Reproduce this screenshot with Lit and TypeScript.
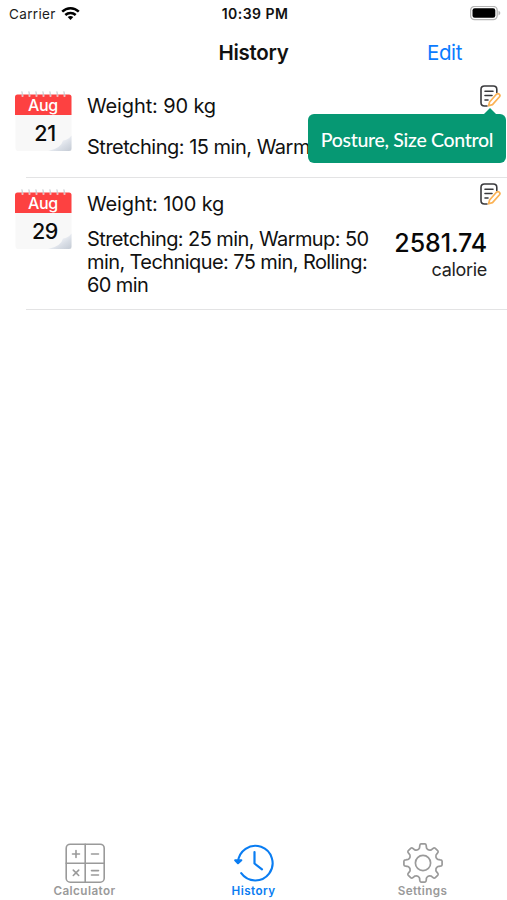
import { LitElement, html, css, svg, nothing } from "lit";
import { customElement, property } from "lit/decorators.js";

interface Entry {
  month: string;
  day: string;
  weight: string;
  activities: string;
  calories?: string;
  note?: string;
}

const ENTRIES: Entry[] = [
  {
    month: "Aug",
    day: "21",
    weight: "90 kg",
    activities: "Stretching: 15 min, Warmup",
    note: "Posture, Size Control",
  },
  {
    month: "Aug",
    day: "29",
    weight: "100 kg",
    activities: "Stretching: 25 min, Warmup: 50 min, Technique: 75 min, Rolling: 60 min",
    calories: "2581.74",
  },
];

const RINGS = [7.5, 14.5, 21.5, 28.5, 35.5, 42.5, 49.5];

function gearPath(c: number, outer: number, root: number, teeth: number): string {
  const pt = (r: number, deg: number) => {
    const a = (deg * Math.PI) / 180;
    return `${(c + r * Math.sin(a)).toFixed(2)} ${(c - r * Math.cos(a)).toFixed(2)}`;
  };
  let d = "";
  for (let i = 0; i < teeth; i++) {
    const a = (i * 360) / teeth;
    d += `${i ? "L" : "M"}${pt(root, a - 15.5)}`;
    d += `Q${pt(root + 0.6, a - 12.5)} ${pt(root + 1.5, a - 12)}`;
    d += `L${pt(outer - 1.6, a - 10.5)}Q${pt(outer, a - 9.6)} ${pt(outer, a - 6)}`;
    d += `L${pt(outer, a + 6)}Q${pt(outer, a + 9.6)} ${pt(outer - 1.6, a + 10.5)}`;
    d += `L${pt(root + 1.5, a + 12)}Q${pt(root + 0.6, a + 12.5)} ${pt(root, a + 15.5)}`;
    d += `Q${pt(root - 1.2, a + 22.5)} ${pt(root, a + 29.5)}`;
  }
  return d + "Z";
}

@customElement("status-bar")
export class StatusBar extends LitElement {
  static styles = css`
    :host {
      display: grid;
      grid-template-columns: 1fr auto 1fr;
      align-items: center;
      height: 27px;
      padding: 0 6px 0 9px;
      font-size: 13.5px;
      color: #1c1c1c;
    }
    .left { display: flex; align-items: center; gap: 5px; }
    .carrier { letter-spacing: 0.35px; }
    .time { font-weight: 600; font-size: 14px; letter-spacing: 0.45px; color: #111; }
    .battery { justify-self: end; }
    svg { display: block; }
  `;
  render() {
    return html`
      <div class="left">
        <span class="carrier">Carrier</span>
        <svg width="19" height="14" viewBox="0 0 19 14" fill="none" stroke="#000" stroke-width="2.5">
          <path d="M1.2 4.7C6 .1 13 .1 17.8 4.7" />
          <path d="M4.3 8C7.3 5.2 11.7 5.2 14.7 8" />
          <path d="M6.7 10.1C8.4 8.6 10.6 8.6 12.3 10.1L9.5 13.1Z" fill="#000" stroke="none" />
        </svg>
      </div>
      <span class="time">10:39 PM</span>
      <svg class="battery" width="31" height="15" viewBox="0 0 31 15">
        <rect x=".6" y=".4" width="26.6" height="13.2" rx="4" fill="#fff" stroke="#b5b5b5" stroke-width="1.3" />
        <rect x="2.5" y="2.2" width="22.8" height="9.6" rx="2.2" />
        <path d="M28.5 4.8Q30.4 5.6 30.4 7.1T28.5 9.4Z" fill="#b5b5b5" />
      </svg>
    `;
  }
}

@customElement("calendar-badge")
export class CalendarBadge extends LitElement {
  @property() month = "";
  @property() day = "";
  static styles = css`
    :host { display: block; width: 57px; height: 61px; margin-top: -1px; }
    svg { display: block; }
    text { font-family: Inter, sans-serif; text-anchor: middle; }
    .month { font-size: 16px; fill: #fff; font-weight: 500; letter-spacing: -0.3px; }
    .day { font-size: 21.5px; font-weight: 500; fill: #0b0b0b; letter-spacing: -0.3px; }
  `;
  render() {
    return html`
      <svg width="57" height="61" viewBox="0 0 57 61">
        <defs>
          <linearGradient id="fold" x1=".1" y1="0.1" x2="1" y2="1">
            <stop offset=".3" stop-color="#f3f5f9" />
            <stop offset=".65" stop-color="#d8dde5" />
            <stop offset="1" stop-color="#c3cad4" />
          </linearGradient>
        </defs>
        <path d="M.5 22H56.5V60H3Q.5 60 .5 57Z" fill="#f8f8f8" />
        <path d="M0 24V6Q0 3.5 2.5 3.5H54Q56.5 3.5 56.5 6V24Z" fill="#fd4141" />
        ${RINGS.map(
          (x) => svg`<path d="M${x} 3.5V5.8" stroke="#fbd0d0" stroke-width="1.8" />
            <path d="M${x - 0.6} .4L${x} 4.8" stroke="#bfc3c8" stroke-width="1" />`,
        )}
        <path d="M33 60Q46 57.5 48 49.5Q53 49 56.5 44.5V57.5Q56.5 60 54 60Z" fill="url(#fold)" />
        <text class="month" x="28" y="20">${this.month}</text>
        <text class="day" x="30" y="49.5">${this.day}</text>
      </svg>
    `;
  }
}

@customElement("history-row")
export class HistoryRow extends LitElement {
  @property({ attribute: false }) entry!: Entry;
  static styles = css`
    :host { display: block; }
    .row {
      position: relative;
      box-sizing: border-box;
      display: grid;
      grid-template-columns: 72px 296px 1fr;
      padding: 12px 20px 0 15px;
      height: 98px;
    }
    .row.tall { height: 132px; }
    .line { height: 1px; margin-left: 26px; margin-top: -1px; background: #e3e3e4; }
    .info { display: flex; flex-direction: column; font-size: 20px; line-height: 23px; color: #111; }
    .weight { margin-top: 3px; letter-spacing: -0.13px; }
    .acts { margin-top: 18px; letter-spacing: -0.59px; }
    .row:not(.tall) .acts { letter-spacing: -0.5px; }
    .tall .acts { margin-top: 12px; }
    .side { display: flex; flex-direction: column; align-items: flex-end; }
    .note { display: block; margin: -7px -15px 0 0; }
    .cal { margin-top: 22px; font-size: 25px; line-height: 30px; font-weight: 500; letter-spacing: -0.1px; color: #080808; }
    .unit { font-size: 18px; line-height: 22px; color: #222; letter-spacing: -0.3px; margin-top: 1px; }
    .tip {
      position: absolute;
      z-index: 2;
      top: 34px;
      right: 1px;
      box-sizing: border-box;
      width: 198px;
      height: 49px;
      padding-top: 2px;
      border-radius: 6px;
      background: #069873;
      color: #fff;
      display: flex;
      align-items: center;
      justify-content: center;
      font-family: Lato, sans-serif;
      font-size: 19.5px;
      font-weight: 500;
      letter-spacing: -0.3px;
      white-space: nowrap;
    }
    .tip::before {
      content: "";
      position: absolute;
      top: -6px;
      right: 9px;
      border: 7px solid transparent;
      border-top: 0;
      border-bottom-color: #069873;
    }
  `;
  render() {
    const e = this.entry;
    return html`
      <div class="row ${e.calories ? "tall" : ""}">
        <calendar-badge month=${e.month} day=${e.day}></calendar-badge>
        <div class="info">
          <span class="weight">Weight: ${e.weight}</span>
          <span class="acts">${e.activities}</span>
        </div>
        <div class="side">
          <svg class="note" width="22" height="23" viewBox="0 0 22 23" fill="none" stroke-linecap="round" stroke-linejoin="round">
            <path d="M16.8 7.5V4.5Q16.8 1 13.3 1H4.5Q1 1 1 4.5V17.5Q1 21 4.5 21H7" stroke="#3a3a3d" stroke-width="1.6" />
            <path d="M5 6.2H13M5 10.5H12M5 15H8" stroke="#3a3a3d" stroke-width="1.6" />
            <path d="M8.6 20.8L9.6 17L16.4 9.3Q17.7 8 19.2 9.1Q20.6 10.3 19.5 11.7L12.5 19.6Z" stroke="#fbb254" stroke-width="1.7" />
          </svg>
          ${e.calories
            ? html`<span class="cal">${e.calories}</span><span class="unit">calorie</span>`
            : nothing}
        </div>
        ${e.note ? html`<div class="tip">${e.note}</div>` : nothing}
      </div>
      <div class="line"></div>
    `;
  }
}

@customElement("tab-bar")
export class TabBar extends LitElement {
  static styles = css`
    :host { display: grid; grid-template-columns: repeat(3, 1fr); height: 58px; }
    .tab { display: flex; flex-direction: column; align-items: center; color: #9a9a9a; }
    .active { color: #0a7df2; }
    .label { font-size: 11.7px; line-height: 14px; font-weight: 600; letter-spacing: 0.42px; }
    svg { display: block; fill: none; stroke: currentColor; stroke-linecap: round; stroke-linejoin: round; }
  `;
  render() {
    return html`
      <div class="tab">
        <svg width="42" height="42" viewBox="0 0 42 42" stroke-width="1.6">
          <rect x="2.2" y="2.2" width="38" height="38" rx="4" />
          <path d="M21.2 2.2V40.2M2.2 21.2H40.2" />
          <path d="M8.5 12H15.5M12 8.5V15.5M27.5 12H34.5M9.3 28.1L14.7 33.5M14.7 28.1L9.3 33.5M27.5 28.6H34.5M27.5 33H34.5" />
        </svg>
        <span class="label">Calculator</span>
      </div>
      <div class="tab active">
        <svg width="42" height="42" viewBox="0 0 42 42" stroke-width="2.1">
          <path d="M5 20.5A17.3 17.3 0 1 1 8.2 31.2" />
          <path d="M2.2 18.3L5 21.2L8.3 18.3Z" fill="currentColor" />
          <path d="M21.5 10V21.5L29 27.3" stroke-width="2.2" />
        </svg>
        <span class="label">History</span>
      </div>
      <div class="tab">
        <svg width="42" height="42" viewBox="0 0 42 42" stroke-width="1.7">
          <path d=${gearPath(21, 19.2, 14.8, 8)} />
          <circle cx="21" cy="21" r="7.6" />
        </svg>
        <span class="label">Settings</span>
      </div>
    `;
  }
}

@customElement("app-root")
export class AppRoot extends LitElement {
  static styles = css`
    :host {
      display: flex;
      flex-direction: column;
      width: 507px;
      height: 900px;
      overflow: hidden;
      background: #fff;
      font-family: Inter, sans-serif;
    }
    .nav { display: grid; grid-template-columns: 1fr auto 1fr; align-items: center; height: 50px; margin-bottom: 3px; }
    .title { grid-column: 2; font-size: 20.5px; font-weight: 600; letter-spacing: -0.3px; color: #111; }
    .edit { justify-self: end; margin-right: 45px; font-size: 20.5px; letter-spacing: -0.4px; color: #0a7bff; }
    .list { flex: 1; }
  `;
  render() {
    return html`
      <status-bar></status-bar>
      <div class="nav"><span class="title">History</span><span class="edit">Edit</span></div>
      <div class="list">${ENTRIES.map((e) => html`<history-row .entry=${e}></history-row>`)}</div>
      <tab-bar></tab-bar>
    `;
  }
}
